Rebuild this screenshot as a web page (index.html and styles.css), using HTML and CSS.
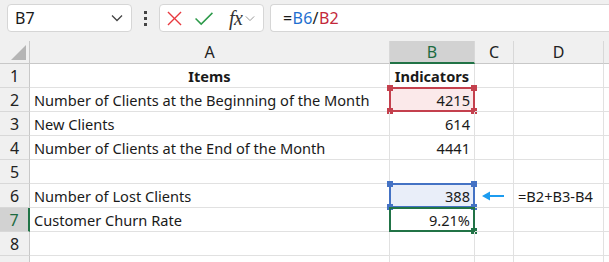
FILE: index.html
```html
<!DOCTYPE html>
<html lang="en">
<head>
    <meta charset="UTF-8">
    <title>Customer Churn Rate</title>
    <link rel="stylesheet" href="styles.css">
</head>
<body>
    <div class="toolbar">
        <div class="name-box">
            <span>B7</span>
            <svg class="chevron" viewBox="0 0 12 8" fill="none" stroke="currentColor" stroke-width="1.3">
                <polyline points="1 1.5 6 6.5 11 1.5"></polyline>
            </svg>
        </div>
        <div class="dots"><i></i><i></i><i></i></div>
        <div class="fx-box">
            <svg class="btn-icon" viewBox="0 0 16 16" fill="none" stroke="#e8393f" stroke-width="1.4">
                <line x1="1" y1="1" x2="15" y2="15"></line>
                <line x1="15" y1="1" x2="1" y2="15"></line>
            </svg>
            <svg class="btn-icon check" viewBox="0 0 20 16" fill="none" stroke="#2d9a4a" stroke-width="1.6">
                <polyline points="1 8 7 14 19 2"></polyline>
            </svg>
            <span class="fx">fx</span>
            <svg class="chevron small" viewBox="0 0 12 8" fill="none" stroke="currentColor" stroke-width="1.2">
                <polyline points="1 1.5 6 6.5 11 1.5"></polyline>
            </svg>
        </div>
        <div class="formula-box">=<span class="ref-blue">B6</span>/<span class="ref-red">B2</span></div>
    </div>

    <div class="sheet">
        <div class="corner"><span class="corner-tri"></span></div>
        <div class="col-head">A</div>
        <div class="col-head active">B</div>
        <div class="col-head">C</div>
        <div class="col-head">D</div>
        <div class="col-head"></div>

        <div class="row-head">1</div>
        <div class="cell bold center">Items</div>
        <div class="cell bold center">Indicators</div>
        <div class="cell"></div><div class="cell"></div><div class="cell"></div>

        <div class="row-head">2</div>
        <div class="cell">Number of Clients at the Beginning of the Month</div>
        <div class="cell num sel red">4215<i class="h tl"></i><i class="h tr"></i><i class="h bl"></i><i class="h br"></i></div>
        <div class="cell"></div><div class="cell"></div><div class="cell"></div>

        <div class="row-head">3</div>
        <div class="cell">New Clients</div>
        <div class="cell num">614</div>
        <div class="cell"></div><div class="cell"></div><div class="cell"></div>

        <div class="row-head">4</div>
        <div class="cell">Number of Clients at the End of the Month</div>
        <div class="cell num">4441</div>
        <div class="cell"></div><div class="cell"></div><div class="cell"></div>

        <div class="row-head">5</div>
        <div class="cell"></div><div class="cell"></div>
        <div class="cell"></div><div class="cell"></div><div class="cell"></div>

        <div class="row-head">6</div>
        <div class="cell">Number of Lost Clients</div>
        <div class="cell num sel blue">388<i class="h tl"></i><i class="h tr"></i><i class="h bl"></i><i class="h br"></i></div>
        <div class="cell arrow-cell">
            <svg class="arrow" viewBox="0 0 22 10" fill="#1c9cf0">
                <path d="M0 5 L8 0.5 L8 4 L22 4 L22 6 L8 6 L8 9.5 Z"></path>
            </svg>
        </div>
        <div class="cell">=B2+B3-B4</div>
        <div class="cell"></div>

        <div class="row-head active">7</div>
        <div class="cell">Customer Churn Rate</div>
        <div class="cell num sel green">9.21%<i class="h br"></i></div>
        <div class="cell"></div><div class="cell"></div><div class="cell"></div>

        <div class="row-head">8</div>
        <div class="cell"></div><div class="cell"></div>
        <div class="cell"></div><div class="cell"></div><div class="cell"></div>

        <div class="row-head"></div>
        <div class="cell"></div><div class="cell"></div>
        <div class="cell"></div><div class="cell"></div><div class="cell"></div>
    </div>
</body>
</html>
```

FILE: styles.css
```css
:root {
    --chrome: #f0f0f0;
    --grid: #e1e1e1;
    --head-line: #c8c8c8;
    --text: #1a1a1a;
    --green: #217346;
    --red: #c4404d;
    --blue: #4472c4;
}

* {
    margin: 0;
    padding: 0;
    box-sizing: border-box;
}

body {
    font-family: "Noto Sans", "Open Sans", sans-serif;
    background: #ffffff;
    color: var(--text);
    overflow: hidden;
}

/* formula bar */
.toolbar {
    display: flex;
    align-items: center;
    height: 41px;
    padding: 0 0 5px 7px;
    background: var(--chrome);
}

.name-box,
.fx-box,
.formula-box {
    height: 28px;
    background: #ffffff;
    border: 1px solid #d6d6d6;
    border-radius: 4px;
    display: flex;
    align-items: center;
}

.name-box {
    width: 125px;
    padding: 0 8px 0 7px;
    justify-content: space-between;
    font-size: 16px;
}

.chevron {
    width: 12px;
    height: 8px;
    color: #444;
}

.chevron.small {
    width: 10px;
    height: 7px;
    color: #999;
}

.dots {
    width: 27px;
    display: flex;
    flex-direction: column;
    align-items: center;
    gap: 3px;
}

.dots i {
    width: 3px;
    height: 3px;
    background: #444;
}

.fx-box {
    width: 105px;
    padding: 0 6px 0 7px;
}

.btn-icon {
    width: 15px;
    height: 15px;
}

.btn-icon.check {
    width: 20px;
    height: 15px;
    margin-left: 12px;
}

.fx {
    font-family: "Liberation Serif", "DejaVu Serif", serif;
    font-style: italic;
    font-size: 20px;
    color: #333;
    margin: 0 3px 0 15px;
    letter-spacing: -0.5px;
}

.formula-box {
    flex: 1;
    margin-left: 6px;
    border-right: none;
    border-radius: 4px 0 0 4px;
    padding-left: 12px;
    font-size: 16px;
    letter-spacing: 0.3px;
}

.ref-blue { color: #1f6fd0; }
.ref-red { color: #c3283a; }

/* grid */
.sheet {
    display: grid;
    grid-template-columns: 30px 360px 85px 39px 90px 1fr;
    grid-auto-rows: 24px;
    grid-template-rows: 23px;
    font-size: 14.6px;
}

.corner,
.col-head,
.row-head {
    background: var(--chrome);
    color: #222;
    display: flex;
    align-items: center;
    justify-content: center;
}

.corner {
    border-right: 1px solid var(--head-line);
    border-bottom: 1px solid var(--head-line);
    justify-content: flex-end;
    align-items: flex-end;
    padding: 0 3px 3px 0;
}

.corner-tri {
    width: 0;
    height: 0;
    border-left: 15px solid transparent;
    border-bottom: 15px solid #b5b5b5;
}

.col-head {
    font-size: 16px;
    border-right: 1px solid #d8d8d8;
    border-bottom: 1px solid var(--head-line);
}

.col-head.active {
    background: #d2d2d2;
    color: #1d6b41;
    border-bottom: 2px solid var(--green);
}

.row-head {
    font-size: 16px;
    border-right: 1px solid var(--head-line);
    border-bottom: 1px solid #d8d8d8;
}

.row-head.active {
    background: #d2d2d2;
    color: #1d6b41;
    border-right: 2px solid var(--green);
}

.cell {
    position: relative;
    display: flex;
    align-items: center;
    padding: 0 4px;
    border-right: 1px solid var(--grid);
    border-bottom: 1px solid var(--grid);
    white-space: nowrap;
}

.cell.bold { font-weight: 700; }
.cell.center { justify-content: center; }
.cell.num { justify-content: flex-end; }

/* reference highlight boxes */
.sel {
    border: 2px solid;
    margin: -1px 0 0 -1px;
    padding-right: 3px;
}

.sel.red { border-color: var(--red); background: #fbe9ea; }
.sel.blue { border-color: var(--blue); background: #e9eef9; }
.sel.green { border-color: var(--green); }

.h {
    position: absolute;
    width: 6px;
    height: 6px;
}

.sel.red .h { background: var(--red); }
.sel.blue .h { background: var(--blue); }
.sel.green .h { background: var(--green); }

.h.tl { top: -4px; left: -4px; }
.h.tr { top: -4px; right: -4px; }
.h.bl { bottom: -4px; left: -4px; }
.h.br { bottom: -4px; right: -4px; }

.arrow-cell {
    padding-left: 7px;
}

.arrow {
    width: 22px;
    height: 10px;
}
```
